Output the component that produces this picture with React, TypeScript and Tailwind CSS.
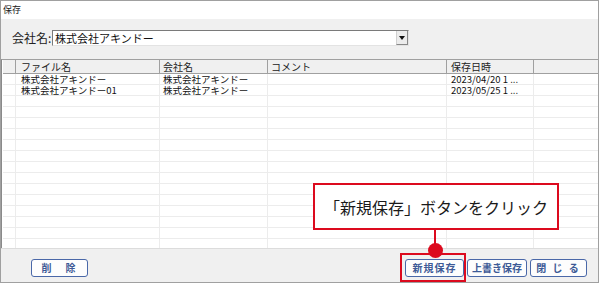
const COLS = 'grid grid-cols-[13px_144px_108px_179px_87px_1fr]'
const ROWS = [
  { file: '株式会社アキンドー', company: '株式会社アキンドー', comment: '', date: '2023/04/20 1 ...' },
  { file: '株式会社アキンドー01', company: '株式会社アキンドー', comment: '', date: '2023/05/25 1 ...' },
]
const EMPTY_ROWS = 14

function Btn({ label, spaced }: { label: string; spaced?: string }) {
  return (
    <button
      className={`h-[18px] rounded-[3px] border-[1.5px] border-[#4a68a8] bg-[#fdfdfd] text-[10px] font-semibold text-[#3d5a96] leading-none flex items-center justify-center ${spaced ?? ''}`}
    >
      {label}
    </button>
  )
}

export default function App() {
  return (
    <div
      className="relative w-[601px] h-[291px] bg-white overflow-hidden"
      style={{ fontFamily: '"Noto Sans CJK JP", "Noto Sans", sans-serif' }}
    >
      <div className="w-[599px] h-[283px] border border-[#a0a0a0] flex flex-col">
        {/* title bar */}
        <div className="h-[18px] bg-white flex items-center pl-[2px] text-[9px] text-[#222]">保存</div>

        {/* company selector */}
        <div className="h-[40px] bg-[#f0f0f0] flex items-start pt-[11px] pl-[11px]">
          <span className="text-[12px] leading-[16px] text-[#222] w-[40px]">会社名:</span>
          <div className="w-[357px] h-[16px] bg-white border border-[#7a7a7a] border-r-[#e3e3e3] border-b-[#e3e3e3] flex items-center">
            <span className="flex-1 pl-[2px] text-[11px] leading-none text-[#111]">株式会社アキンドー</span>
            <div className="w-[12px] h-[14px] bg-[#ececec] border-l border-[#d0d0d0] border-r border-r-[#888] border-b border-b-[#888] flex items-center justify-center">
              <svg width="6" height="4" viewBox="0 0 6 4">
                <path d="M0 0h6L3 4z" fill="#111" />
              </svg>
            </div>
          </div>
        </div>

        {/* grid */}
        <div className="flex-1 flex flex-col bg-white border-t border-[#a0a0a0] border-l border-l-[#8a8a8a] pl-px overflow-hidden">
          <div className={`${COLS} h-[14px] shrink-0 bg-[#f0f0f0] border-b border-[#a0a0a0] text-[10px] leading-[13px] text-[#222]`}>
            <div className="border-r border-[#a0a0a0]" />
            <div className="border-r border-[#a0a0a0] pl-[5px]">ファイル名</div>
            <div className="border-r border-[#a0a0a0] pl-[3px]">会社名</div>
            <div className="border-r border-[#a0a0a0] pl-[3px]">コメント</div>
            <div className="border-r border-[#a0a0a0] pl-[4px]">保存日時</div>
            <div />
          </div>
          {ROWS.map((r, i) => (
            <div key={i} className={`${COLS} h-[11px] shrink-0 border-b border-[#ececec] text-[9.5px] leading-[10px] text-[#111]`}>
              <div className="border-r border-[#ececec]" />
              <div className="border-r border-[#ececec] pl-[5px] whitespace-nowrap">{r.file}</div>
              <div className="border-r border-[#ececec] pl-[3px] whitespace-nowrap">{r.company}</div>
              <div className="border-r border-[#ececec] pl-[3px]">{r.comment}</div>
              <div className="border-r border-[#ececec] pl-[4px] whitespace-nowrap">{r.date}</div>
              <div />
            </div>
          ))}
          {Array.from({ length: EMPTY_ROWS }).map((_, i) => (
            <div key={'e' + i} className={`${COLS} h-[11px] shrink-0 border-b border-[#ececec]`}>
              <div className="border-r border-[#ececec]" />
              <div className="border-r border-[#ececec]" />
              <div className="border-r border-[#ececec]" />
              <div className="border-r border-[#ececec]" />
              <div className="border-r border-[#ececec]" />
              <div />
            </div>
          ))}
        </div>

        {/* buttons */}
        <div className="h-[34px] shrink-0 bg-[#f0f0f0] border-t border-[#dcdcdc] flex items-start pt-[10px] pl-[30px] pr-[11px]">
          <Btn label="削　除" spaced="w-[57px] tracking-[2px]" />
          <div className="flex-1" />
          <div className="flex gap-[3px]">
            <Btn label="新規保存" spaced="w-[59px] tracking-[1px]" />
            <Btn label="上書き保存" spaced="w-[60px]" />
            <Btn label="閉 じ る" spaced="w-[57px] tracking-[2px]" />
          </div>
        </div>
      </div>

      {/* annotation */}
      <div className="absolute left-[313px] top-[183px] w-[246px] h-[47px] border-2 border-[#dc0a1e] bg-white flex items-center justify-center text-[16px] text-[#1a1a1a]">
        「新規保存」ボタンをクリック
      </div>
      <div className="absolute left-[434px] top-[230px] w-[2px] h-[14px] bg-[#dc0a1e]" />
      <div className="absolute left-[428px] top-[243px] w-[15px] h-[15px] rounded-full bg-[#dc0a1e]" />
      <div className="absolute left-[400px] top-[253px] w-[66px] h-[29px] border-2 border-[#dc0a1e]" />
    </div>
  )
}
